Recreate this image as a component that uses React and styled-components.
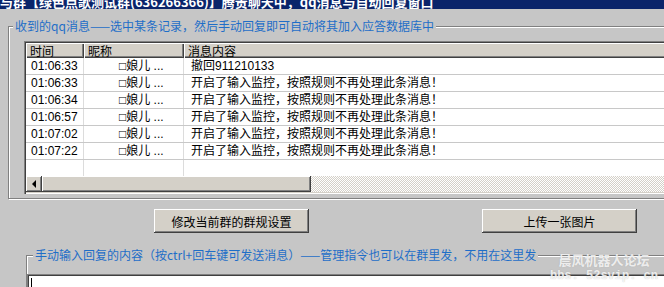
import React from 'react'
import styled, { createGlobalStyle } from 'styled-components'

const GlobalStyle = createGlobalStyle`
  body {
    margin: 0;
    background: #c6c6c6;
  }
`

const Page = styled.div`
  position: relative;
  width: 664px;
  height: 287px;
  overflow: hidden;
  background: #c6c6c6;
  font-family: "Noto Sans CJK SC", sans-serif;
  font-size: 12px;
  color: #000;
`

const TitleBar = styled.div`
  height: 9px;
  background: #0a246a;
  display: flex;
  align-items: flex-end;
  overflow: hidden;
`

const TitleText = styled.div`
  color: #fff;
  font-weight: 700;
  font-size: 13px;
  line-height: 16px;
  margin-bottom: -1px;
  white-space: nowrap;
`

const Main = styled.div`
  padding: 17px 0 0 8px;
`

const GroupBox = styled.div`
  position: relative;
  box-sizing: border-box;
  width: ${(p) => p.$width}px;
  height: ${(p) => p.$height}px;
  margin: ${(p) => p.$top || 0}px 0 0 ${(p) => p.$left || 0}px;
  padding: ${(p) => p.$pad};
  border: 1px solid #808080;
  box-shadow: inset 1px 1px 0 #fff, 1px 1px 0 #fff;
`

const Legend = styled.span`
  position: absolute;
  top: -8px;
  left: ${(p) => p.$left}px;
  padding: 0 2px;
  background: #c6c6c6;
  color: #1e6ec8;
  font-size: 12px;
  line-height: 14px;
  white-space: nowrap;
`

const ListView = styled.div`
  box-sizing: border-box;
  width: 700px;
  height: 153px;
  padding: 2px;
  background: #fff;
  display: flex;
  flex-direction: column;
  box-shadow: inset 1px 1px 0 #808080, inset 2px 2px 0 #404040,
    inset -1px -1px 0 #fff, inset -2px -2px 0 #d4d0c8;
`

const HeaderRow = styled.div`
  display: flex;
  height: 15px;
  background: #d4d0c8;
`

const HeaderCell = styled.div`
  box-sizing: border-box;
  width: ${(p) => p.$w}px;
  flex: ${(p) => (p.$w ? 'none' : 1)};
  padding-left: 4px;
  line-height: 15px;
  box-shadow: inset 1px 1px 0 #fff, inset -1px -1px 0 #404040, inset -2px -2px 0 #808080;
`

const Row = styled.div`
  display: flex;
  box-sizing: border-box;
  height: 17px;
  border-bottom: 1px solid #c8c8c8;
`

const Filler = styled.div`
  display: flex;
  flex: 1;
`

const Cell = styled.div`
  box-sizing: border-box;
  width: ${(p) => p.$w}px;
  flex: ${(p) => (p.$w ? 'none' : 1)};
  padding-left: ${(p) => p.$pad}px;
  border-right: ${(p) => (p.$w ? '1px solid #dcdcdc' : 'none')};
  font-family: "Liberation Sans", "Noto Sans CJK SC", sans-serif;
  font-size: 12px;
  line-height: 16px;
  white-space: nowrap;
  overflow: hidden;
`

const ScrollBar = styled.div`
  display: flex;
  height: 16px;
  background: repeating-conic-gradient(#d4d0c8 0 25%, #fff 0 50%) 0 0 / 2px 2px;
`

const raised = `
  background: #d4d0c8;
  box-shadow: inset -1px -1px 0 #404040, inset 1px 1px 0 #fff,
    inset -2px -2px 0 #808080, inset 2px 2px 0 #d4d0c8;
`

const ScrollButton = styled.div`
  ${raised}
  width: 16px;
  height: 16px;
  display: flex;
  align-items: center;
  justify-content: center;
`

const Arrow = styled.div`
  width: 0;
  height: 0;
  border-top: 4px solid transparent;
  border-bottom: 4px solid transparent;
  border-right: 4px solid #000;
  margin-left: -1px;
`

const Thumb = styled.div`
  ${raised}
  width: 269px;
  height: 16px;
`

const ButtonRow = styled.div`
  display: flex;
  gap: 173px;
  margin-top: 10px;
  padding-left: 146px;
`

const Button = styled.button`
  ${raised}
  box-sizing: border-box;
  width: 155px;
  height: 24px;
  border: none;
  padding: 0;
  font-family: "Noto Sans CJK SC", sans-serif;
  font-size: 12px;
  color: #000;
`

const InputBox = styled.div`
  box-sizing: border-box;
  width: 700px;
  height: 40px;
  padding: 4px 0 0 4px;
  background: #fff;
  box-shadow: inset 1px 1px 0 #808080, inset 2px 2px 0 #404040;
`

const Caret = styled.div`
  width: 1px;
  height: 13px;
  background: #000;
`

const Watermark = styled.div`
  position: absolute;
  top: 251px;
  right: 6px;
  display: flex;
  flex-direction: column;
  align-items: center;
  color: rgba(255, 255, 255, 0.8);
  font-weight: 700;
  text-shadow: 0 0 1px rgba(150, 150, 150, 0.6);
`

const MarkTitle = styled.div`
  font-family: "Noto Sans CJK SC", sans-serif;
  font-size: 13px;
  line-height: 17px;
`

const MarkUrl = styled.div`
  font-family: "Liberation Mono", monospace;
  font-size: 12px;
  line-height: 15px;
  margin-top: 1px;
`

const messages = [
  { time: '01:06:33', text: '撤回911210133' },
  { time: '01:06:33', text: '开启了输入监控，按照规则不再处理此条消息！' },
  { time: '01:06:34', text: '开启了输入监控，按照规则不再处理此条消息！' },
  { time: '01:06:57', text: '开启了输入监控，按照规则不再处理此条消息！' },
  { time: '01:07:02', text: '开启了输入监控，按照规则不再处理此条消息！' },
  { time: '01:07:22', text: '开启了输入监控，按照规则不再处理此条消息！' },
]

export default function App() {
  return (
    <Page>
      <GlobalStyle />
      <TitleBar>
        <TitleText>与群【绿色点歌测试群(636266366)】腾贵聊天中，qq消息与自动回复窗口</TitleText>
      </TitleBar>
      <Main>
        <GroupBox $width={720} $height={173} $pad="14px 0 0 15px">
          <Legend $left={4}>收到的qq消息——选中某条记录，然后手动回复即可自动将其加入应答数据库中</Legend>
          <ListView>
            <HeaderRow>
              <HeaderCell $w={58}>时间</HeaderCell>
              <HeaderCell $w={100}>昵称</HeaderCell>
              <HeaderCell>消息内容</HeaderCell>
            </HeaderRow>
            {messages.map((m, i) => (
              <Row key={i}>
                <Cell $w={58} $pad={5}>{m.time}</Cell>
                <Cell $w={100} $pad={35}>□娘儿 ...</Cell>
                <Cell $pad={7}>{m.text}</Cell>
              </Row>
            ))}
            <Filler>
              <Cell $w={58} />
              <Cell $w={100} />
              <Cell />
            </Filler>
            <ScrollBar>
              <ScrollButton><Arrow /></ScrollButton>
              <Thumb />
            </ScrollBar>
          </ListView>
        </GroupBox>
        <ButtonRow>
          <Button>修改当前群的群规设置</Button>
          <Button>上传一张图片</Button>
        </ButtonRow>
        <GroupBox $width={720} $height={80} $top={22} $left={18} $pad="18px 0 0 0">
          <Legend $left={6}>手动输入回复的内容（按ctrl+回车键可发送消息）——管理指令也可以在群里发，不用在这里发</Legend>
          <InputBox>
            <Caret />
          </InputBox>
        </GroupBox>
      </Main>
      <Watermark>
        <MarkTitle>晨风机器人论坛</MarkTitle>
        <MarkUrl>bbs. 52svip. cn</MarkUrl>
      </Watermark>
    </Page>
  )
}
